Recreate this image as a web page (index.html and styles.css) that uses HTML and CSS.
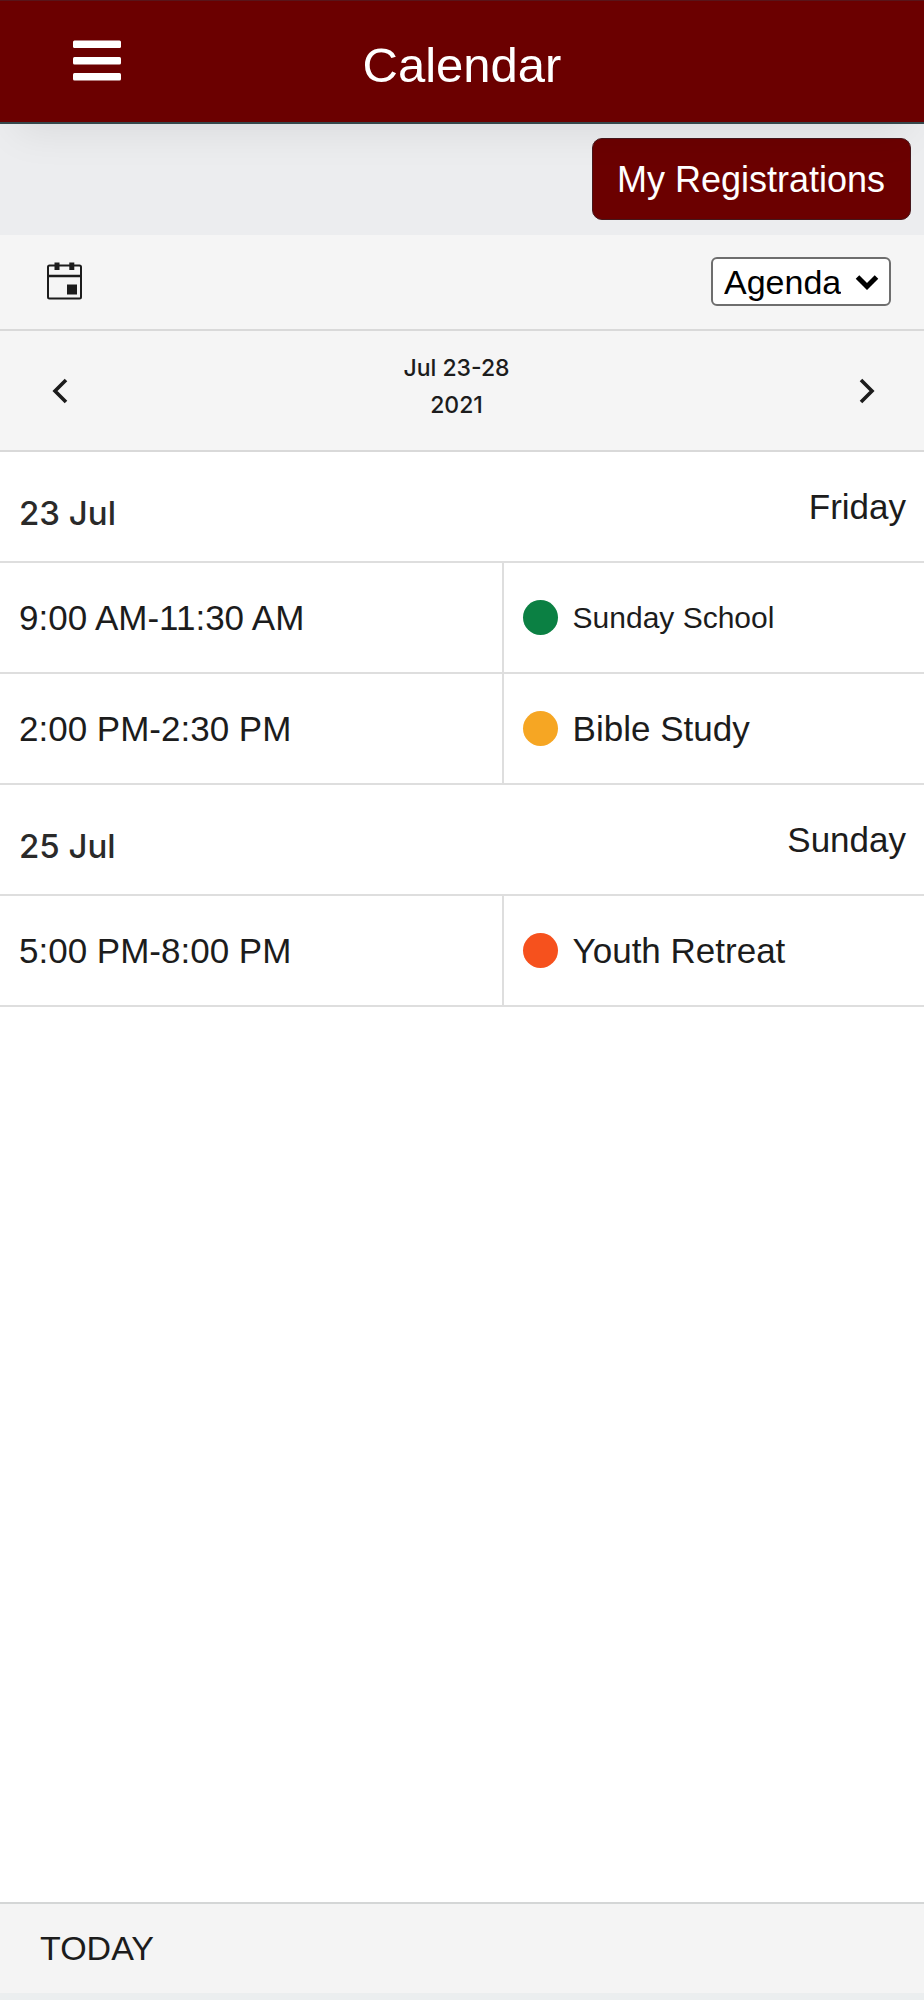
FILE: index.html
```html
<!DOCTYPE html>
<html lang="en">
<head>
<meta charset="utf-8">
<meta name="viewport" content="width=device-width, initial-scale=1">
<title>Calendar</title>
<link rel="stylesheet" href="styles.css">
</head>
<body>
<div class="app">
  <header class="topbar">
    <button class="icon-button menu" type="button" aria-label="Menu">
      <svg width="48" height="42" viewBox="0 0 48 42" fill="#ffffff" aria-hidden="true">
        <rect y="0.5" width="48" height="7.5" rx="1.5"/>
        <rect y="17" width="48" height="7.5" rx="1.5"/>
        <rect y="33" width="48" height="7.5" rx="1.5"/>
      </svg>
    </button>
    <h1 class="title">Calendar</h1>
  </header>

  <div class="actions">
    <button class="primary" type="button">My Registrations</button>
  </div>

  <div class="toolbar">
    <button class="icon-button date-picker" type="button" aria-label="Pick a date">
      <svg width="35" height="38" viewBox="0 0 35 38" fill="none" stroke="#1c1c1c" aria-hidden="true">
        <rect x="1" y="3.5" width="33" height="33" rx="1.5" stroke-width="2"/>
        <path d="M1 14H34" stroke-width="2.5"/>
        <path d="M10 0.5V8M24.800 0.5V8" stroke-width="5"/>
        <rect x="20" y="22.500" width="10" height="10" fill="#1c1c1c" stroke="none"/>
      </svg>
    </button>
    <div class="view-picker">
      <select class="view-select" aria-label="View">
        <option>Agenda</option>
        <option>Day</option>
        <option>Week</option>
        <option>Month</option>
      </select>
      <svg class="view-arrow" width="24" height="16" viewBox="0 0 24 16" fill="none" stroke="#000000" stroke-width="5" aria-hidden="true">
        <path d="M2.500 2L12 11.500L21.500 2"/>
      </svg>
    </div>
  </div>

  <nav class="range" aria-label="Date range">
    <button class="icon-button" type="button" aria-label="Previous">
      <svg width="16" height="26" viewBox="0 0 16 26" fill="none" stroke="#1c1c1c" stroke-width="3.600" aria-hidden="true">
        <path d="M14 2L3 13L14 24"/>
      </svg>
    </button>
    <p class="range-label">Jul 23-28<br>2021</p>
    <button class="icon-button" type="button" aria-label="Next">
      <svg width="16" height="26" viewBox="0 0 16 26" fill="none" stroke="#1c1c1c" stroke-width="3.600" aria-hidden="true">
        <path d="M2 2L13 13L2 24"/>
      </svg>
    </button>
  </nav>

  <main class="content">
    <table class="agenda">
      <tbody>
        <tr>
          <th class="date" scope="rowgroup">23 Jul</th>
          <td class="weekday">Friday</td>
        </tr>
        <tr>
          <td class="time">9:00 AM-11:30 AM</td>
          <td><div class="event"><span class="dot green"></span><span class="small">Sunday School</span></div></td>
        </tr>
        <tr>
          <td class="time">2:00 PM-2:30 PM</td>
          <td><div class="event"><span class="dot amber"></span><span>Bible Study</span></div></td>
        </tr>
      </tbody>
      <tbody>
        <tr>
          <th class="date" scope="rowgroup">25 Jul</th>
          <td class="weekday">Sunday</td>
        </tr>
        <tr>
          <td class="time">5:00 PM-8:00 PM</td>
          <td><div class="event"><span class="dot orange"></span><span>Youth Retreat</span></div></td>
        </tr>
      </tbody>
    </table>
  </main>

  <footer class="bottombar">
    <button class="today" type="button">TODAY</button>
  </footer>
</div>
</body>
</html>
```
FILE: styles.css
```css
* {
  box-sizing: border-box;
}

body {
  margin: 0;
  background: #ebeeef;
  color: #1c1c1c;
  font-family: "Liberation Sans", Arial, sans-serif;
  font-size: 34px;
}

button {
  padding: 0;
  border: 0;
  background: none;
  color: inherit;
  font: inherit;
  cursor: pointer;
}

.app {
  display: flex;
  flex-direction: column;
  min-height: 100vh;
  padding-bottom: 7px;
}

.icon-button {
  display: flex;
}

.topbar {
  position: relative;
  z-index: 1;
  display: grid;
  grid-template-columns: 1fr auto 1fr;
  align-items: center;
  padding: 12px 0 4px;
  border-top: 1px solid #58151a;
  border-bottom: 2px solid #35484c;
  background: #6b0000;
  box-shadow: 0 24px 40px -16px rgba(0, 0, 0, 0.08);
}

.menu {
  padding: 0 0 10px 73px;
}

.title {
  margin: 0;
  color: #ffffff;
  font-size: 49px;
  font-weight: 400;
  line-height: 105px;
}

.actions {
  display: flex;
  justify-content: flex-end;
  padding: 14px 13px 15px;
  background: #ecedef;
}

.primary {
  padding: 2px 25px 0 24px;
  border: 1px solid #45181c;
  border-radius: 10px;
  background: #6b0000;
  color: #ffffff;
  font-size: 36px;
  line-height: 78px;
}

.toolbar {
  display: flex;
  align-items: center;
  justify-content: space-between;
  padding: 22px 33px 23px 47px;
  border-bottom: 2px solid #d9d9d9;
  background: #f5f5f5;
}

.date-picker {
  padding-bottom: 2px;
}

.view-picker {
  position: relative;
}

.view-select {
  display: block;
  width: 180px;
  height: 49px;
  padding: 0 48px 0 11px;
  border: 2px solid #6e6e6e;
  border-radius: 6px;
  background: #ffffff;
  color: #000000;
  font: inherit;
  appearance: none;
}

.view-arrow {
  position: absolute;
  top: 18px;
  right: 12px;
  pointer-events: none;
}

.range {
  display: flex;
  align-items: center;
  justify-content: space-between;
  padding: 19px 49px 18px 52px;
  border-bottom: 2px solid #d9d9d9;
  background: #f5f5f5;
}

.range-label {
  flex: 1;
  margin: 0;
  padding: 0 14px 8px 0;
  font-family: Inter, sans-serif;
  font-size: 23px;
  font-weight: 500;
  line-height: 37px;
  text-align: center;
}

.content {
  flex: 1;
  background: #ffffff;
}

.agenda {
  width: 100%;
  border-collapse: separate;
  border-spacing: 0;
  table-layout: fixed;
  font-size: 35px;
}

.agenda th,
.agenda td {
  height: 111px;
  padding: 0 18px 0 19px;
  border-bottom: 2px solid #dedede;
}

.agenda .date {
  width: 54.5%;
  padding-top: 13px;
  color: #2a2a2a;
  font-family: Inter, sans-serif;
  font-size: 33px;
  font-weight: 500;
  text-align: left;
}

.agenda .weekday {
  text-align: right;
}

.agenda .time {
  border-right: 2px solid #dedede;
}

.event {
  display: flex;
  align-items: center;
  gap: 15px;
}

.small {
  font-size: 30px;
}

.dot {
  width: 35px;
  height: 35px;
  border-radius: 50%;
}

.green {
  background: #0b8043;
}

.amber {
  background: #f6a623;
}

.orange {
  background: #f6511d;
}

.bottombar {
  padding: 0 40px;
  border-top: 2px solid #d4d6d6;
  background: #f4f4f4;
}

.today {
  line-height: 89px;
}
```
